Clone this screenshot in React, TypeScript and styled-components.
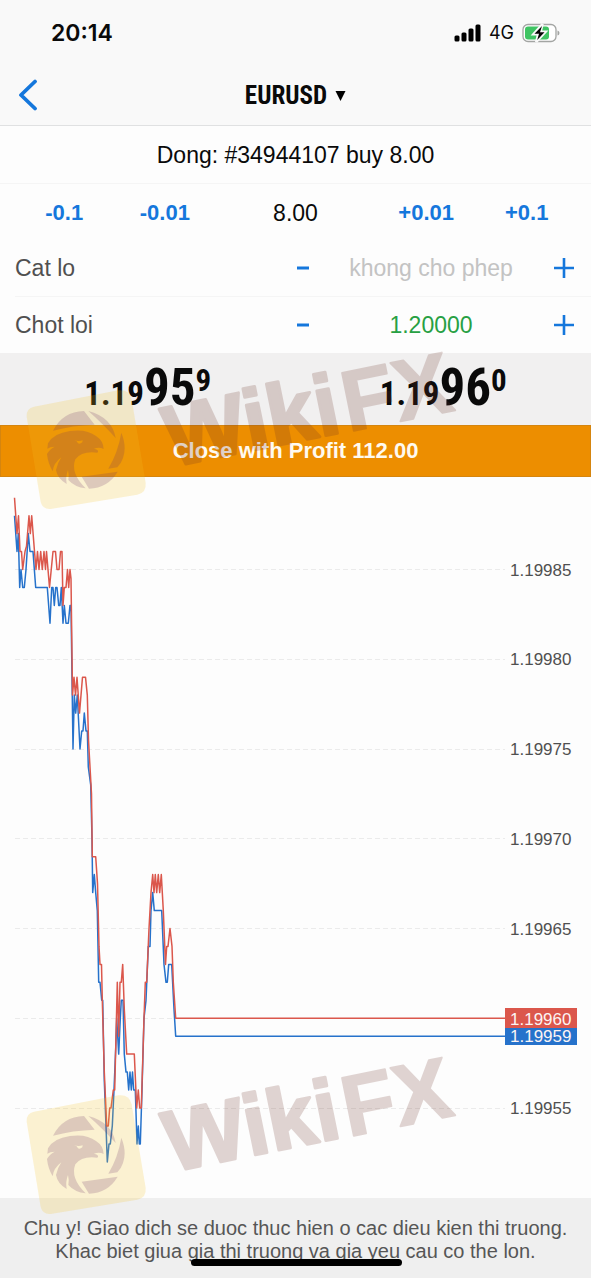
import React, { useState } from "react";
import styled, { createGlobalStyle } from "styled-components";

const GlobalStyle = createGlobalStyle`
  * { box-sizing: border-box; }
  body {
    margin: 0;
    background: #fdfdfd;
    color: #0a0a0a;
    font-family: "Liberation Sans", Arial, sans-serif;
  }
  button, input { font: inherit; }
`;

const BLUE = "#1577dc";
const BID = "#2672cb";
const ASK = "#db574c";

const Screen = styled.div`
  display: flex;
  flex-direction: column;
  min-height: 100vh;
  overflow: hidden;
`;

const Header = styled.header`
  background: #f9f9f9;
  border-bottom: 1px solid #e0e1e2;
`;

const StatusBar = styled.div`
  display: flex;
  align-items: center;
  justify-content: space-between;
  height: 65px;
  padding: 0 31px 0 51px;
  font-family: Inter, sans-serif;
`;

const Clock = styled.time`
  font-size: 23px;
  font-weight: 600;
`;

const StatusIcons = styled.div`
  display: flex;
  align-items: center;
  gap: 8px;
  font-size: 18px;
`;

const NavBar = styled.nav`
  display: grid;
  grid-template-columns: 1fr auto 1fr;
  align-items: center;
  height: 60px;
`;

const PlainButton = styled.button`
  display: flex;
  align-items: center;
  justify-content: center;
  border: 0;
  padding: 0;
  background: none;
  color: ${BLUE};
  cursor: pointer;
`;

const BackButton = styled(PlainButton)`
  width: 56px;
  height: 60px;
`;

const SymbolButton = styled(PlainButton)`
  gap: 8px;
  color: #0a0a0a;
  font-family: "Roboto Condensed", Roboto, sans-serif;
  font-size: 25px;
  font-weight: 700;
`;

const OrderTitle = styled.h1`
  margin: 0;
  border-bottom: 1px solid #f5f5f5;
  padding-top: 1px;
  font-size: 23px;
  font-weight: 400;
  line-height: 56px;
  text-align: center;
`;

const VolumeRow = styled.div`
  display: grid;
  grid-template-columns: 5fr 5fr 8fr 5fr 5fr;
  align-items: center;
  height: 56px;
  padding: 2px 14px 0;
`;

const StepButton = styled(PlainButton)`
  font-size: 22px;
  font-weight: 700;
`;

const TextInput = styled.input<{ $color?: string }>`
  width: 100%;
  min-width: 0;
  border: 0;
  padding: 0;
  outline: 0;
  background: none;
  color: ${(p) => p.$color ?? "#0a0a0a"};
  font-size: 23px;
  text-align: center;

  &::placeholder {
    color: #c3c3c3;
    opacity: 1;
  }
`;

const FieldRow = styled.div`
  display: grid;
  grid-template-columns: 1fr 44px 212px 54px;
  align-items: center;
  height: 56px;
  margin-left: 15px;

  & + & {
    height: 57px;
    border-top: 1px solid #f5f5f5;
  }
`;

const FieldLabel = styled.label`
  color: #505050;
  font-size: 23px;
`;

const IconButton = styled(PlainButton)`
  height: 44px;
`;

const Quotes = styled.section`
  position: relative;
`;

const Prices = styled.div`
  display: grid;
  grid-template-columns: 1fr 1fr;
  height: 72px;
  background: #f1f0f0;
  font-family: "Roboto Condensed", Roboto, sans-serif;
  font-weight: 700;
`;

const Price = styled.div`
  display: flex;
  align-items: baseline;
  justify-content: center;
  font-size: 33px;
  line-height: 70px;
`;

const Pips = styled.span`
  font-size: 51px;
`;

const Point = styled.sup`
  align-self: flex-start;
  font-size: 31px;
  line-height: 56px;
`;

const CloseButton = styled.button`
  display: block;
  width: 100%;
  height: 52px;
  border: 1px solid #d5850f;
  padding: 0;
  background: #ed8e00;
  color: #fffaf0;
  font-size: 22px;
  font-weight: 700;
  cursor: pointer;
`;

const ChartPanel = styled.section`
  position: relative;
  flex: 1;
`;

const ChartSvg = styled.svg`
  display: block;
  width: 100%;
  height: auto;
  font-size: 17px;
`;

const WatermarkLayer = styled.div<{ $top: number }>`
  position: absolute;
  z-index: 2;
  top: ${(p) => p.$top}px;
  left: 24px;
  pointer-events: none;
`;

const WatermarkSvg = styled.svg`
  display: block;
  overflow: visible;
`;

const Footer = styled.footer`
  position: relative;
  padding: 19px 12px 15px;
  background: #efefef;
  color: #565656;
  font-size: 20px;
  line-height: 23px;
  text-align: center;
`;

const HomeIndicator = styled.div`
  position: absolute;
  bottom: 12px;
  left: 50%;
  width: 211px;
  height: 7px;
  margin-left: -105px;
  border-radius: 4px;
  background: #000;
`;

type Sample = [number, number];

/* Each sample is [x, last two digits of the quote]. */
const askSamples: Sample[] = [
  [14.5, 89], [17, 87], [18.5, 88], [20, 86], [21.5, 86], [22.7, 85], [25, 86], [26.5, 86.3], [29, 88],
  [30.3, 87], [31.7, 88], [34.5, 86], [36, 85], [37.5, 86], [39, 85], [40.7, 86], [42.3, 85], [44, 86],
  [45.5, 85], [46.5, 86], [49.5, 84], [53, 86], [55.5, 86], [57, 85], [59, 85], [60.5, 86], [62, 86],
  [63, 83], [64.3, 84], [66, 84], [67.5, 85], [68.7, 84], [70, 85], [71, 84.5], [72.5, 78], [74, 79],
  [75.5, 78], [77, 79], [79.5, 77], [82.5, 79], [85.5, 79], [87.3, 78], [88.5, 75.5], [91.5, 72.5],
  [92.3, 69], [95.7, 69], [97.5, 67.5], [99, 64], [100, 63], [101.5, 63], [102.3, 61], [104.3, 57],
  [106.7, 54], [108.3, 54], [109.7, 55], [111, 55], [113.3, 56], [114.7, 56], [116, 59], [117.3, 62],
  [118.7, 59], [120, 62], [121.3, 62], [122.7, 63], [124.3, 60.5], [126.7, 58], [134.3, 58],
  [136.7, 55], [138.3, 56], [139.7, 55], [141.3, 55], [144, 60], [145.3, 62], [146.7, 62], [149, 65],
  [151, 67], [152.7, 68], [154, 67], [155.3, 68], [156.7, 67], [158.3, 68], [159.7, 67], [161.3, 68],
  [163.3, 66], [165.5, 63], [166.7, 64], [168, 64], [170, 65], [172, 64], [173.3, 62], [175.7, 60],
  [505, 60],
];

const bidSamples: Sample[] = [
  [14.5, 88], [17, 86], [18.3, 87], [19.7, 84], [21, 85], [22.7, 84], [24.3, 84], [26, 85], [28.3, 87],
  [30, 86], [33, 86], [35.7, 84], [47.3, 84], [50, 82], [51.7, 84], [53, 84], [54.3, 83], [55.7, 84],
  [57, 84], [58.7, 83], [60, 83], [61.3, 84], [63, 82], [64.3, 83], [66, 82], [68.3, 82], [70, 83],
  [71, 83], [73, 75], [74.3, 78], [75.7, 77], [77.3, 78], [80, 75], [81.7, 76], [83, 76], [84.3, 77],
  [86, 76], [87.3, 76], [88.3, 74], [90.7, 73], [92, 70], [92.7, 67], [94.3, 68], [95.7, 67],
  [97.3, 66], [98.7, 62], [100, 62], [101.7, 61], [102.7, 61], [104.3, 56.5], [106, 54], [107.3, 52],
  [109, 53], [110.3, 53], [112.3, 54], [114, 56], [115.7, 58.3], [116.7, 60], [118.7, 58],
  [120.3, 60], [121.3, 61], [123, 61], [124.3, 58], [126, 57], [127.3, 57], [128.7, 56], [130, 57],
  [131.3, 56], [132.5, 57], [133.7, 56], [135.3, 56], [137, 53], [138.3, 54], [139.3, 53],
  [140.3, 53], [142, 56], [144, 60], [146, 61], [148.3, 64], [150, 64], [151, 66], [152.7, 67],
  [154.3, 66], [161.7, 66], [164, 63], [166, 62], [167.3, 62], [168.7, 63], [171.7, 63],
  [174, 60.5], [175.7, 59], [505, 59],
];

const yOf = (value: number) => 92.5 + (85 - value) * 17.95;
const toPoints = (samples: Sample[]) => samples.map(([x, v]) => `${x},${yOf(v).toFixed(1)}`).join(" ");

function Watermark({ top }: { top: number }) {
  return (
    <WatermarkLayer $top={top} aria-hidden="true">
      <WatermarkSvg width="460" height="170" viewBox="0 0 460 170">
        <g transform="translate(-4 33) scale(0.3333)">
          <path
            d="M20 110Q18 85 42 80L295 31Q328 27 335 58L377 308Q380 338 352 344L92 387Q68 389 62 366Z"
            fill="#f6c522"
            opacity="0.2"
          />
          <g fill="#6a2f66" opacity="0.2">
            <path d="M99 152Q128 95 192 93L224 134Q158 136 99 152Z" />
            <path d="M205 93Q276 112 287 174Q245 128 205 93Z" />
            <path d="M304 158Q321 200 309 234Q303 252 292 262L265 266Q294 218 304 158Z" />
            <path d="M185 290L293 275Q264 324 207 326Z" />
            <path
              fillRule="evenodd"
              d="M84 190Q100 160 150 153Q200 146 228 168Q250 182 251 207Q238 200 222 206Q240 210 232 218Q185 212 166 238Q150 280 197 325Q165 322 145 300Q148 285 144 270Q136 290 140 312Q112 295 108 270Q112 250 124 232Q100 250 98 274Q84 250 81 222Q88 208 104 200Q90 200 82 206ZM162 180Q174 185 188 181L187 187Q180 193 174 190Q172 183 162 180Z"
            />
          </g>
        </g>
        <g
          transform="translate(147 121) rotate(-11.5)"
          opacity="0.2"
          fill="#6b3026"
          stroke="#6b3026"
          strokeLinejoin="round"
          fontSize="86"
          fontWeight="700"
        >
          <text x="0" y="-1" strokeWidth="3">Wiki</text>
          <text x="181" y="0" strokeWidth="2">FX</text>
        </g>
      </WatermarkSvg>
    </WatermarkLayer>
  );
}

function Chart() {
  const levels = [85, 80, 75, 70, 65, 60, 55];
  return (
    <ChartSvg viewBox="0 0 591 721" role="img" aria-label="EURUSD">
      {levels.map((level) => (
        <g key={level}>
          <line
            x1="15"
            x2="505"
            y1={Math.floor(yOf(level)) + 0.5}
            y2={Math.floor(yOf(level)) + 0.5}
            stroke="#ebebeb"
            strokeDasharray="5 3"
          />
          {level !== 60 && (
            <text x="510" y={Math.round(yOf(level)) + 6} fill="#505050">{`1.199${level}`}</text>
          )}
        </g>
      ))}
      <g fill="none" strokeWidth="1.5" strokeLinejoin="round">
        <polyline points={toPoints(bidSamples)} stroke={BID} />
        <polyline points={toPoints(askSamples)} stroke={ASK} />
      </g>
      <rect x="505" y="531" width="72" height="20" fill={ASK} />
      <rect x="505" y="551" width="72" height="17" fill={BID} />
      <g fill="#fbf4f4">
        <text x="510" y="548">1.19960</text>
        <text x="510" y="565">1.19959</text>
      </g>
    </ChartSvg>
  );
}

function MinusIcon() {
  return (
    <svg width="14" height="4" viewBox="0 0 14 4" aria-hidden="true">
      <path d="M1 2H13" stroke="currentColor" strokeWidth="3" />
    </svg>
  );
}

function PlusIcon() {
  return (
    <svg width="22" height="22" viewBox="0 0 22 22" aria-hidden="true">
      <path d="M1 11H21M11 1V21" stroke="currentColor" strokeWidth="2.6" />
    </svg>
  );
}

interface LevelFieldProps {
  id: string;
  label: string;
  initial?: string;
}

function LevelField({ id, label, initial = "" }: LevelFieldProps) {
  const [value, setValue] = useState(initial);
  const step = (delta: number) => setValue((v) => (v ? (Number(v) + delta).toFixed(5) : v));
  return (
    <FieldRow>
      <FieldLabel htmlFor={id}>{label}</FieldLabel>
      <IconButton type="button" aria-label={`${label} -`} onClick={() => step(-0.00001)}>
        <MinusIcon />
      </IconButton>
      <TextInput
        id={id}
        $color="#27a043"
        value={value}
        placeholder="khong cho phep"
        onChange={(e) => setValue(e.target.value)}
      />
      <IconButton type="button" aria-label={`${label} +`} onClick={() => step(0.00001)}>
        <PlusIcon />
      </IconButton>
    </FieldRow>
  );
}

function StatusGlyphs() {
  return (
    <StatusIcons>
      <svg width="27" height="18" viewBox="0 0 27 18" aria-hidden="true">
        <rect x="0.5" y="11.5" width="5" height="6" rx="1.5" />
        <rect x="7.5" y="8.5" width="5" height="9" rx="1.5" />
        <rect x="14.5" y="4.5" width="5" height="13" rx="1.5" />
        <rect x="21.5" y="0.5" width="5" height="17" rx="1.5" />
      </svg>
      <span>4G</span>
      <svg width="38" height="20" viewBox="0 0 38 20" aria-hidden="true">
        <rect x="1" y="1.5" width="33" height="17" rx="5" fill="#fff" stroke="#a3a5a3" strokeWidth="1.3" />
        <path d="M35.5 7.5Q37.5 8 37.5 10T35.5 12.5Z" fill="#a3a5a3" />
        <rect x="3" y="3.5" width="24" height="13" rx="3" fill="#3fc463" />
        <path d="M20.5 1L11.5 11.3H16.2L14.2 19L23.5 8.7H18.6Z" fill="#050505" stroke="#f9f9f9" strokeWidth="2.6" />
        <path d="M20 3L12.5 10.8H17L15.2 17L22.5 9.2H18Z" fill="#050505" />
      </svg>
    </StatusIcons>
  );
}

export default function App() {
  const [volume, setVolume] = useState("8.00");
  const change = (delta: number) => setVolume((v) => (Number(v) + delta).toFixed(2));

  return (
    <Screen>
      <GlobalStyle />
      <Header>
        <StatusBar>
          <Clock>20:14</Clock>
          <StatusGlyphs />
        </StatusBar>
        <NavBar>
          <BackButton type="button" aria-label="Back">
            <svg width="22" height="32" viewBox="0 0 22 32" aria-hidden="true">
              <path
                d="M18 2.5L4 16L18 29.5"
                fill="none"
                stroke={BLUE}
                strokeWidth="3.8"
                strokeLinecap="round"
                strokeLinejoin="round"
              />
            </svg>
          </BackButton>
          <SymbolButton type="button">
            EURUSD
            <svg width="11" height="12" viewBox="0 0 11 12" aria-hidden="true">
              <path d="M0.5 2H10.5L5.5 12Z" />
            </svg>
          </SymbolButton>
        </NavBar>
      </Header>

      <OrderTitle>Dong: #34944107 buy 8.00</OrderTitle>

      <VolumeRow>
        <StepButton type="button" onClick={() => change(-0.1)}>-0.1</StepButton>
        <StepButton type="button" onClick={() => change(-0.01)}>-0.01</StepButton>
        <TextInput aria-label="Volume" value={volume} onChange={(e) => setVolume(e.target.value)} />
        <StepButton type="button" onClick={() => change(0.01)}>+0.01</StepButton>
        <StepButton type="button" onClick={() => change(0.1)}>+0.1</StepButton>
      </VolumeRow>

      <LevelField id="stop-loss" label="Cat lo" />
      <LevelField id="take-profit" label="Chot loi" initial="1.20000" />

      <Quotes>
        <Prices>
          <Price>
            1.19<Pips>95</Pips><Point>9</Point>
          </Price>
          <Price>
            1.19<Pips>96</Pips><Point>0</Point>
          </Price>
        </Prices>
        <CloseButton type="button">Close with Profit 112.00</CloseButton>
        <Watermark top={-6} />
      </Quotes>

      <ChartPanel>
        <Chart />
        <Watermark top={575} />
      </ChartPanel>

      <Footer>
        Chu y! Giao dich se duoc thuc hien o cac dieu kien thi truong. Khac biet giua gia thi truong va gia
        yeu cau co the lon.
        <HomeIndicator />
      </Footer>
    </Screen>
  );
}
